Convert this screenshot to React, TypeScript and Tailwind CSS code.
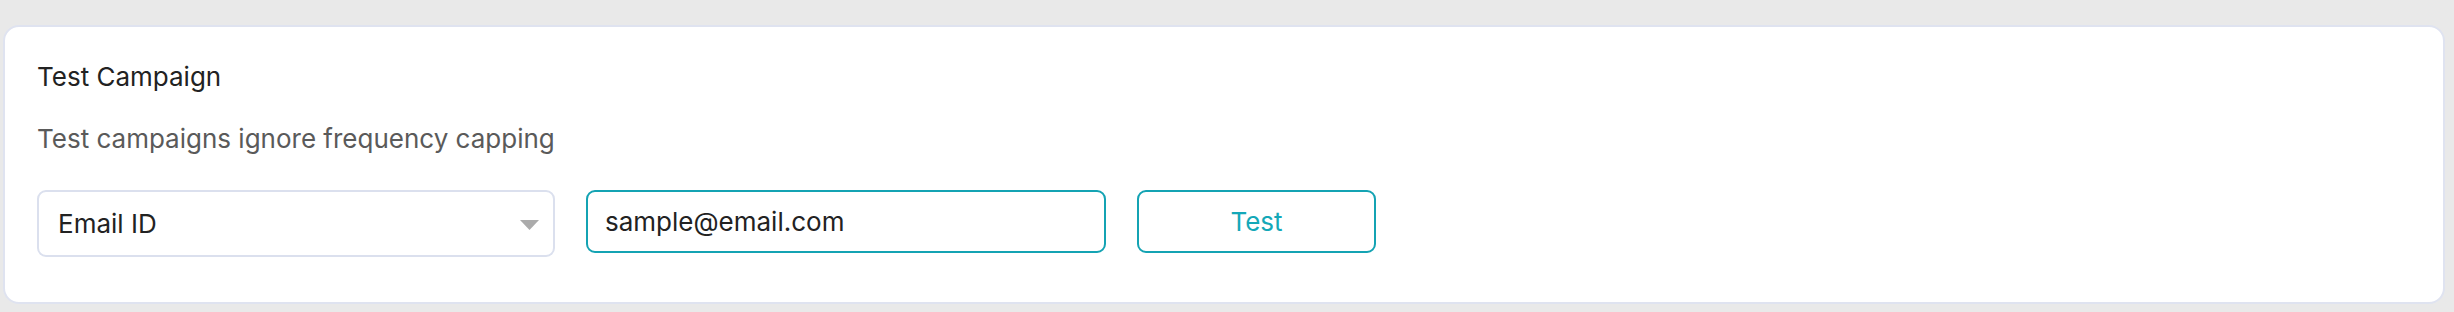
import { useState } from "react";

export default function App() {
  const [idType, setIdType] = useState("Email ID");
  const [value, setValue] = useState("sample@email.com");

  return (
    <main
      className="min-h-screen w-full bg-[#e9e9e9] pt-[25px] pl-[3px] pr-[9px]"
      style={{ fontFamily: "Inter, 'Open Sans', sans-serif" }}
    >
      <section className="h-[279px] rounded-[16px] border-2 border-[#dfe3f0] bg-white pl-[32px] pt-[34px]">
        <h2 className="text-[26px] leading-[32px] text-[#222222]">
          Test Campaign
        </h2>
        <p className="mt-[30px] text-[26px] leading-[32px] text-[#5a5a5a]">
          Test campaigns ignore frequency capping
        </p>

        <div className="mt-[35px] flex items-start gap-[31px]">
          <div className="relative h-[67px] w-[518px] rounded-[9px] border-2 border-[#dbe0ee] bg-white">
            <select
              value={idType}
              onChange={(e) => setIdType(e.target.value)}
              className="h-full w-full appearance-none bg-transparent pl-[19px] text-[26px] text-[#222222] outline-none"
            >
              <option>Email ID</option>
              <option>User ID</option>
              <option>Phone</option>
            </select>
            <svg
              className="pointer-events-none absolute right-[14px] top-[28px]"
              width="19"
              height="10"
              viewBox="0 0 19 10"
            >
              <path d="M0 0h19L9.5 10z" fill="#ababab" />
            </svg>
          </div>

          <input
            value={value}
            onChange={(e) => setValue(e.target.value)}
            className="h-[63px] w-[520px] rounded-[9px] border-2 border-[#14a3b3] bg-white pl-[17px] text-[26px] text-[#222222] outline-none"
          />

          <button className="h-[63px] w-[239px] rounded-[9px] border-2 border-[#14a3b3] bg-white text-[26px] text-[#14a8b8]">
            Test
          </button>
        </div>
      </section>
    </main>
  );
}
